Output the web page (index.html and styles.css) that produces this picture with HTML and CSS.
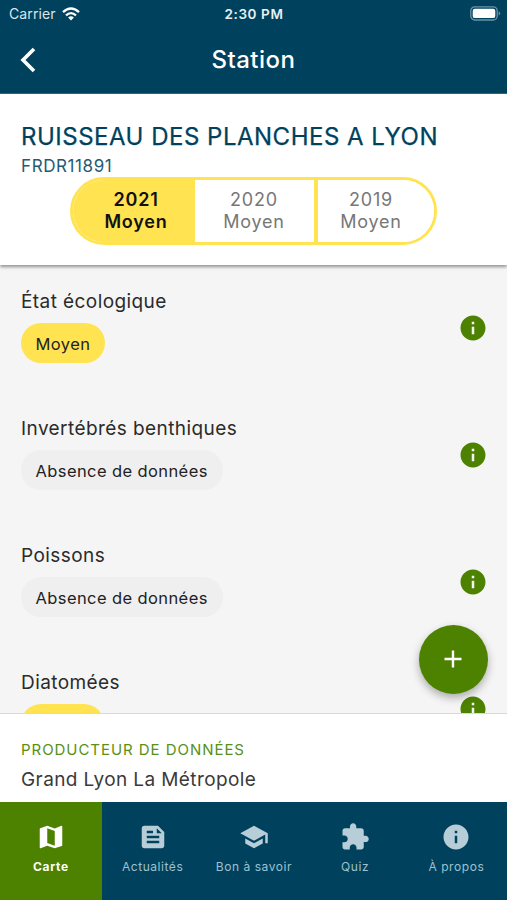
FILE: index.html
```html
<!DOCTYPE html>
<html lang="fr">
<head>
<meta charset="utf-8">
<title>Station</title>
<link rel="stylesheet" href="styles.css">
</head>
<body>
<svg class="defs" width="0" height="0">
<symbol id="info" viewBox="0 0 24 24"><path d="M12 2C6.480 2 2 6.480 2 12s4.480 10 10 10 10-4.480 10-10S17.520 2 12 2zm1 15h-2v-6h2v6zm0-8h-2V7h2v2z"/></symbol>
</svg>
<div class="app">
<header class="header">
<div class="status">
<div class="carrier"><span class="carrier-name">Carrier</span>
<svg class="wifi" viewBox="0 0 18 14"><path d="M1 5.200Q9-2.200 17 5.200M4 8.400Q9 3.900 14 8.400" fill="none" stroke="#fff" stroke-width="2.300"/><path d="M6.100 10.600Q9 8.100 11.900 10.600L9 13.600z" fill="#fff"/></svg></div>
<span class="clock">2:30 PM</span>
<svg class="battery" viewBox="0 0 31 15"><rect x=".8" y=".8" width="26.400" height="13.200" rx="4" fill="none" stroke="#6d93a8" stroke-width="1.300"/><rect x="2.700" y="2.700" width="22.600" height="9.400" rx="2.200" fill="#fff"/><path d="M28.700 5.200q3 2.200 0 4.400z" fill="#6d93a8"/></svg>
</div>
<div class="toolbar">
<svg class="back" viewBox="0 0 16 26"><path d="M14 2L3 13l11 11" fill="none" stroke="#fff" stroke-width="3.600"/></svg>
<h1 class="title">Station</h1>
<span></span>
</div>
</header>
<section class="station">
<h2 class="name">RUISSEAU DES PLANCHES A LYON</h2>
<div class="code">FRDR11891</div>
<div class="years">
<button class="year active"><span>2021</span><span>Moyen</span></button>
<button class="year"><span>2020</span><span>Moyen</span></button>
<button class="year last"><span>2019</span><span>Moyen</span></button>
</div>
</section>
<main class="list">
<div class="item"><div><div class="label">État écologique</div><span class="chip yellow">Moyen</span></div><svg class="info"><use href="#info"/></svg></div>
<div class="item"><div><div class="label">Invertébrés benthiques</div><span class="chip">Absence de données</span></div><svg class="info"><use href="#info"/></svg></div>
<div class="item"><div><div class="label">Poissons</div><span class="chip">Absence de données</span></div><svg class="info"><use href="#info"/></svg></div>
<div class="item"><div><div class="label">Diatomées</div><span class="chip yellow peek"></span></div><svg class="info"><use href="#info"/></svg></div>
<button class="fab"><svg viewBox="0 0 18 18"><path d="M9 .5v17M.5 9h17" stroke="#fff" stroke-width="2.400"/></svg></button>
</main>
<section class="producer">
<div class="caption">PRODUCTEUR DE DONNÉES</div>
<div class="org">Grand Lyon La Métropole</div>
</section>
<nav class="tabs">
<a class="tab active"><svg viewBox="0 0 24 24"><path d="M20.500 3l-.16.03L15 5.100 9 3 3.360 4.900c-.21.07-.36.25-.36.48V20.500c0 .28.22.5.5.5l.16-.03L9 18.900l6 2.100 5.640-1.900c.21-.07.36-.25.36-.48V3.500c0-.28-.22-.5-.5-.5zM15 19l-6-2.110V5l6 2.110V19z"/></svg><span>Carte</span></a>
<a class="tab"><svg viewBox="0 0 24 24"><path d="M16 3H5c-1.100 0-2 .9-2 2v14c0 1.100.9 2 2 2h14c1.100 0 2-.9 2-2V8l-5-5zM7 7h5v2H7V7zm10 10H7v-2h10v2zm0-4H7v-2h10v2zm-2-4V5l4 4h-4z"/></svg><span>Actualités</span></a>
<a class="tab"><svg viewBox="0 0 24 24"><path d="M5 13.180v4L12 21l7-3.820v-4L12 17l-7-3.820zM12 3L1 9l11 6 9-4.910V17h2V9L12 3z"/></svg><span>Bon à savoir</span></a>
<a class="tab"><svg viewBox="0 0 24 24"><path d="M20.500 11H19V7c0-1.100-.9-2-2-2h-4V3.500C13 2.120 11.880 1 10.500 1S8 2.120 8 3.500V5H4c-1.100 0-1.990.9-1.990 2v3.800H3.500c1.490 0 2.700 1.210 2.700 2.700s-1.210 2.700-2.700 2.700H2V20c0 1.100.9 2 2 2h3.800v-1.500c0-1.490 1.210-2.700 2.700-2.700 1.490 0 2.700 1.210 2.700 2.700V22H17c1.100 0 2-.9 2-2v-4h1.500c1.380 0 2.500-1.120 2.500-2.500S21.880 11 20.500 11z"/></svg><span>Quiz</span></a>
<a class="tab"><svg viewBox="0 0 24 24"><use href="#info"/></svg><span>À propos</span></a>
</nav>
</div>
</body>
</html>
```
FILE: styles.css
```css
* { box-sizing: border-box; }
body { margin: 0; font-family: Inter, "Liberation Sans", sans-serif; }
button { font: inherit; border: 0; padding: 0; }
h1, h2 { margin: 0; font-weight: 500; }
.defs { position: absolute; }
.app { width: 507px; height: 900px; display: flex; flex-direction: column; overflow: hidden; background: #fff; }
.header { height: 94px; flex: none; background: #00425d; border-bottom: 1px solid #35677d; color: #fff; }
.status { height: 27px; display: grid; grid-template-columns: 1fr auto 1fr; align-items: center; padding: 0 6px 0 9px; font-size: 14px; }
.carrier { display: flex; align-items: center; gap: 6px; color: #dbe5ea; }
.carrier-name { letter-spacing: .1px; }
.wifi { width: 18px; height: 14px; }
.clock { font-weight: 600; font-size: 13.500px; letter-spacing: .6px; color: #e9f0f3; margin-right: 2px; }
.battery { width: 31px; height: 15px; justify-self: end; }
.toolbar { height: 66px; display: grid; grid-template-columns: 1fr auto 1fr; align-items: center; padding: 0 20px; }
.back { width: 16px; height: 26px; }
.title { font-size: 24px; letter-spacing: .5px; line-height: 30px; }
.station { height: 171px; flex: none; padding: 28px 21px 0; position: relative; z-index: 1; background: #fff; color: #00425d; box-shadow: 0 2px 3px rgba(0,0,0,.4); }
.name { font-size: 24px; font-weight: 400; line-height: 30px; letter-spacing: .5px; white-space: nowrap; -webkit-text-stroke: .25px; }
.code { font-size: 17px; line-height: 20px; margin-top: 4px; letter-spacing: .6px; color: #245b73; }
.years { display: grid; grid-template-columns: 122px 119px 1fr; width: 367px; height: 68px; margin: 1px 0 0 49px; border: 3px solid #ffe351; border-radius: 34px; overflow: hidden; background: #fff; }
.year { display: flex; flex-direction: column; align-items: center; justify-content: center; background: #fff; color: #777; font-size: 18px; line-height: 22px; letter-spacing: .8px; padding-right: 1px; }
.year.active { background: #ffe351; color: #111; font-weight: 600; padding-left: 5px; }
.year.last { border-left: 4px solid #ffe351; padding-right: 10px; }
.list { flex: none; height: 448px; overflow: hidden; position: relative; background: #f5f5f5; padding-top: 24px; }
.item { height: 127px; padding: 0 19px 0 21px; display: flex; justify-content: space-between; color: #2b2b2b; }
.label { font-size: 19px; line-height: 26px; letter-spacing: .42px; margin-bottom: 8px; white-space: nowrap; }
.chip { display: inline-block; height: 40px; line-height: 43px; border-radius: 20px; padding: 0 15px 0 14.500px; font-size: 16.500px; letter-spacing: .4px; background: #efefef; color: #222; }
.chip.yellow { background: #ffe351; }
.chip.peek { width: 83px; }
.info { width: 30px; height: 30px; margin-top: 24px; fill: #4d8200; }
.fab { position: absolute; left: 419px; top: 360px; width: 69px; height: 69px; border-radius: 50%; background: #4d8200; box-shadow: 0 4px 8px rgba(0,0,0,.3); display: grid; place-items: center; }
.fab svg { width: 18px; height: 18px; margin: 0 1px 1px 0; }
.producer { height: 89px; flex: none; border-top: 1px solid #d9d9d9; padding: 26px 21px 0; background: #fff; }
.caption { font-size: 15px; line-height: 20px; letter-spacing: .95px; color: #599017; }
.org { font-size: 19px; line-height: 28px; margin-top: 6px; letter-spacing: .4px; color: #3a3a3a; }
.tabs { height: 98px; flex: none; display: grid; grid-template-columns: 102px repeat(4, 1fr); background: #00425d; }
.tab { display: flex; flex-direction: column; align-items: center; padding-top: 20px; font-size: 12px; letter-spacing: .55px; color: #9fc0cf; fill: #b7ced9; white-space: nowrap; }
.tab svg { width: 30px; height: 30px; }
.tab span { line-height: 16px; margin-top: 7px; }
.tab.active { background: #4d8200; color: #fff; fill: #fff; font-weight: 700; letter-spacing: .7px; }
```
